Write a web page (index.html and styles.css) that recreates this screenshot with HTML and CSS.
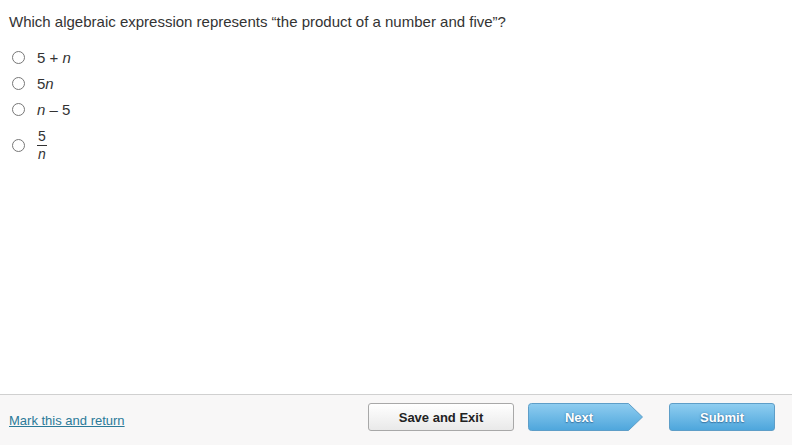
FILE: index.html
```html
<!DOCTYPE html>
<html>
<head>
<meta charset="utf-8">
<link rel="stylesheet" href="styles.css">
</head>
<body>
<div class="page">
  <main class="question">
    <p class="prompt">Which algebraic expression represents “the product of a number and five”?</p>
    <ul class="options">
      <li class="option"><span class="radio"></span><span class="label">5 + <i>n</i></span></li>
      <li class="option"><span class="radio"></span><span class="label">5<i>n</i></span></li>
      <li class="option"><span class="radio"></span><span class="label"><i>n</i> – 5</span></li>
      <li class="option frac-option"><span class="radio"></span><span class="label frac"><span class="num">5</span><span class="den"><i>n</i></span></span></li>
    </ul>
  </main>
  <footer class="footer">
    <a class="mark" href="#">Mark this and return</a>
    <div class="buttons">
      <button class="btn save">Save and Exit</button>
      <button class="btn next">
        <svg class="next-bg" width="116" height="28" viewBox="0 0 116 28" preserveAspectRatio="none">
          <defs>
            <linearGradient id="g" x1="0" y1="0" x2="0" y2="1">
              <stop offset="0" stop-color="#8fcdf0"/>
              <stop offset="1" stop-color="#4ea6dc"/>
            </linearGradient>
          </defs>
          <path d="M3.5 0.5 H100.5 L114.5 14 L100.5 27.5 H3.5 Q0.5 27.5 0.5 24.5 V3.5 Q0.5 0.5 3.5 0.5 Z" fill="url(#g)" stroke="#5e9ec8"/>
        </svg>
        <span class="btn-text">Next</span>
      </button>
      <button class="btn submit">Submit</button>
    </div>
  </footer>
</div>
</body>
</html>
```
FILE: styles.css
```css
html, body {
  margin: 0;
  padding: 0;
  background: #fff;
}
body {
  font-family: "Liberation Sans", Arial, sans-serif;
  color: #333;
}
.page {
  width: 792px;
  height: 445px;
  display: flex;
  flex-direction: column;
}
.question {
  flex: 1;
  padding: 12px 0 0 9px;
}
.prompt {
  margin: 0;
  font-size: 15px;
  line-height: 20px;
  color: #333;
}
.options {
  list-style: none;
  margin: 12px 0 0 0;
  padding: 0;
}
.option {
  display: flex;
  align-items: center;
  height: 26px;
  font-size: 15px;
  color: #333;
}
.option i {
  font-style: italic;
}
.radio {
  width: 11px;
  height: 11px;
  border: 1px solid #777;
  border-radius: 50%;
  margin: 0 12px 0 3px;
  background: #fff;
}
.frac-option {
  height: 46px;
}
.frac {
  display: inline-flex;
  flex-direction: column;
  align-items: center;
  line-height: 15px;
  font-size: 14px;
}
.frac .num {
  border-bottom: 1px solid #333;
  padding: 0 1px 1px;
}
.frac .den {
  padding-top: 1px;
}
.footer {
  height: 50px;
  border-top: 1px solid #d0d0d0;
  background: #f8f7f7;
  display: flex;
  align-items: flex-start;
  justify-content: space-between;
  padding: 8px 17px 0 9px;
  box-sizing: border-box;
  height: 51px;
}
.mark {
  font-size: 13px;
  color: #2b7a99;
  text-decoration: underline;
  margin-top: 10px;
}
.buttons {
  display: flex;
  align-items: center;
}
.btn {
  font-family: "Liberation Sans", Arial, sans-serif;
  font-size: 13px;
  font-weight: bold;
  height: 28px;
  padding: 0;
  cursor: pointer;
}
.save {
  width: 146px;
  border: 1px solid #a8a8a8;
  border-radius: 3px;
  background: linear-gradient(#ffffff, #e9e9e9);
  color: #222;
  margin-right: 14px;
}
.next {
  position: relative;
  width: 116px;
  border: none;
  background: none;
  margin-right: 25px;
  color: #fff;
}
.next-bg {
  position: absolute;
  left: 0;
  top: 0;
}
.btn-text {
  position: relative;
  padding-right: 14px;
  text-shadow: 0 0 2px #3d7aa8, 0 1px 1px #3d7aa8;
}
.submit {
  width: 106px;
  border: 1px solid #5e9ec8;
  border-radius: 3px;
  background: linear-gradient(#8fcdf0, #4ea6dc);
  color: #fff;
  text-shadow: 0 0 2px #3d7aa8, 0 1px 1px #3d7aa8;
}
```
